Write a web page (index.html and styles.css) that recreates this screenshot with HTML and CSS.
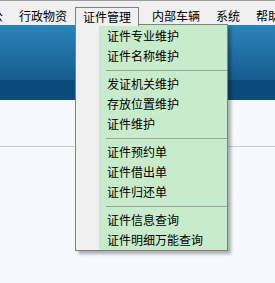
FILE: index.html
```html
<!DOCTYPE html>
<html lang="zh-CN">
<head>
    <meta charset="UTF-8">
    <title>证件管理</title>
    <link rel="stylesheet" href="styles.css">
</head>
<body>
    <!-- Menu bar -->
    <div class="menubar">
        <span class="menu-item first">办公</span>
        <span class="menu-item">行政物资</span>
        <span class="menu-item open">证件管理</span>
        <span class="menu-item next">内部车辆</span>
        <span class="menu-item">系统</span>
        <span class="menu-item">帮助</span>
    </div>

    <!-- Banner -->
    <div class="banner">
        <div class="banner-top"></div>
        <div class="banner-bottom"></div>
    </div>

    <!-- Content -->
    <div class="content">
        <div class="toolbar"></div>
    </div>

    <!-- Dropdown -->
    <div class="dropdown">
        <div class="drop-item">证件专业维护</div>
        <div class="drop-item">证件名称维护</div>
        <div class="drop-sep"></div>
        <div class="drop-item">发证机关维护</div>
        <div class="drop-item">存放位置维护</div>
        <div class="drop-item">证件维护</div>
        <div class="drop-sep"></div>
        <div class="drop-item">证件预约单</div>
        <div class="drop-item">证件借出单</div>
        <div class="drop-item">证件归还单</div>
        <div class="drop-sep"></div>
        <div class="drop-item">证件信息查询</div>
        <div class="drop-item">证件明细万能查询</div>
    </div>
</body>
</html>
```

FILE: styles.css
```css
/* General */
body {
    margin: 0;
    font-family: "Noto Sans CJK SC", "Noto Sans", sans-serif;
    font-size: 12px;
    color: #000;
    background-color: #f5f9fd;
    width: 275px;
    height: 283px;
    overflow: hidden;
    position: relative;
}

/* Menu bar */
.menubar {
    display: flex;
    height: 18px;
    padding-top: 6px;
    border-top: 1px solid #9a9a9a;
    background-color: #f0f0f0;
    white-space: nowrap;
}

.menu-item {
    height: 18px;
    line-height: 18px;
    padding: 0 8px;
    flex-shrink: 0;
}

.menu-item.first {
    margin-left: -29px;
}

.menu-item.open {
    position: relative;
    z-index: 2;
    height: 18px;
    padding: 0 7px;
    border: 1px solid #808080;
    border-bottom: none;
    background-color: #f0f0f0;
}

.menu-item.next {
    margin-left: 5px;
}

/* Banner */
.banner-top {
    height: 55px;
    background: linear-gradient(#2c84ba, #145d8f);
}

.banner-bottom {
    height: 20px;
    background-color: #0b4b79;
}

/* Content */
.content {
    height: 46px;
    border-bottom: 1px solid #c9cbcd;
}

/* Dropdown */
.dropdown {
    position: absolute;
    z-index: 1;
    left: 75px;
    top: 24px;
    width: 151px;
    padding-top: 1px;
    border: 1px solid #808080;
    background: linear-gradient(to right, #f0f0f0 23px, #c8ebcb 23px);
    box-shadow: 3px 3px 3px rgba(0, 0, 0, 0.3);
}

.drop-item {
    height: 20px;
    line-height: 20px;
    padding-left: 31px;
    white-space: nowrap;
}

.drop-sep {
    height: 8px;
    margin-left: 30px;
    background: linear-gradient(transparent 4px, #a0a0a0 4px, #a0a0a0 5px, transparent 5px);
}
```
